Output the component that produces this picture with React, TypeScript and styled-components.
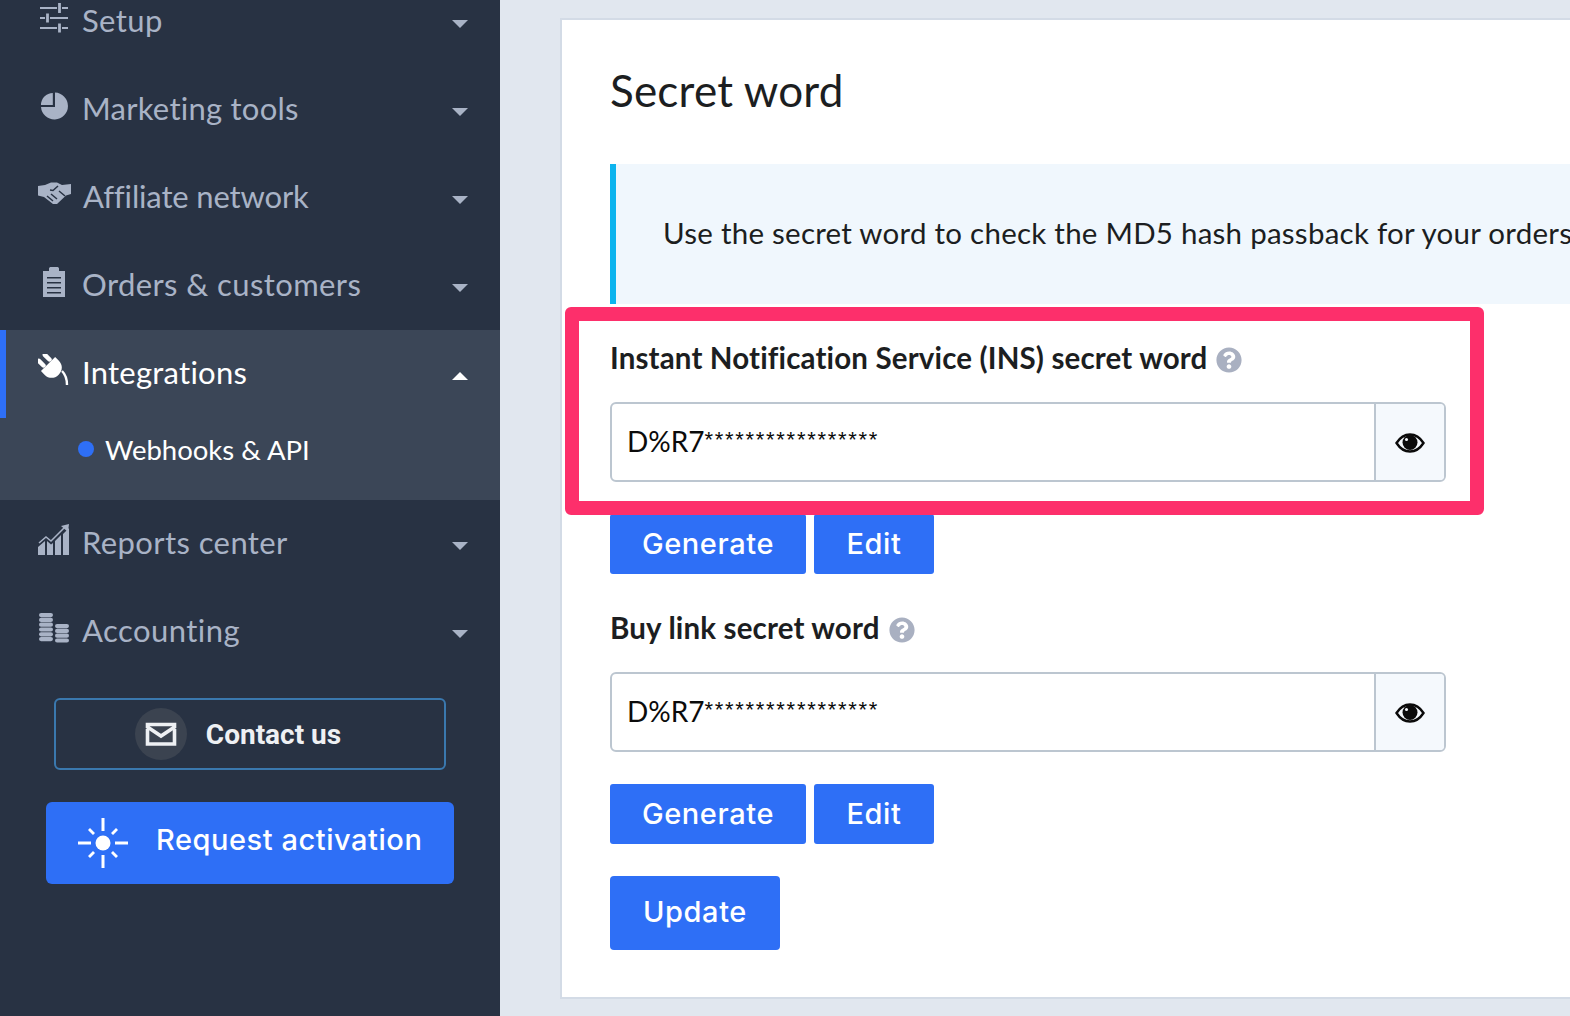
import React from "react";
import styled, { createGlobalStyle } from "styled-components";
import { FaQuestionCircle } from "react-icons/fa";

const Global = createGlobalStyle`
  html, body { margin: 0; padding: 0; background: #e1e7ef; }
  body {
    font-family: "Lato", "Liberation Sans", sans-serif;
    font-variant-ligatures: none;
    overflow: hidden;
  }
`;

const SetupIcon = () => (
  <svg width="30" height="30" viewBox="0 0 30 30" fill="none" stroke="currentColor" strokeWidth="2">
    <path d="M1 5h17M23 5h6M1 15h5M11 15h18M1 25h17M23 25h6" />
    <path d="M20.500 0v10M8.500 10.500v9M20.500 20.500v9" strokeWidth="2.800" />
  </svg>
);

const PieIcon = () => (
  <svg width="30" height="30" viewBox="0 0 30 30" fill="currentColor">
    <path d="M16 1.500A13.500 13.500 0 1 1 2 16h14z" />
    <path d="M13.800 2v12H2A12 12 0 0 1 13.800 2z" />
  </svg>
);

const HandshakeIcon = () => (
  <svg width="33" height="24" viewBox="0 0 33 24">
    <path fill="currentColor" d="M0 4l7-1 6-2.500h6l5 2.500 9-1v10l-5 1.500-9 8.500h-4l-9-7-6-1.500z" />
    <path fill="none" stroke="#283243" strokeWidth="1.500" d="M20 4l-5 4.500-3-.5M21 9l6 5M9 14l6 5M13 12l6 5" />
  </svg>
);

const OrdersIcon = () => (
  <svg width="30" height="32" viewBox="0 0 30 32">
    <path fill="currentColor" fillRule="evenodd" d="M4 5h6V2.500C10 1.500 11 1 12 1h6c1 0 2 .5 2 1.500V5h6v26H4zM8 11v1.500h14V11zM8 16v1.500h14V16zM8 21v1.500h14V21zM8 26v1.500h14V26z" />
  </svg>
);

const PlugIcon = () => (
  <svg width="32" height="32" viewBox="0 0 32 32" fill="currentColor">
    <g transform="rotate(-45 15 15)">
      <rect x="8.500" y="-3" width="4.500" height="11" rx="2.200" />
      <rect x="17" y="-3" width="4.500" height="11" rx="2.200" />
      <path d="M5 8h20v5c0 6-4 10-10 10S5 19 5 13z" />
    </g>
    <path fill="none" stroke="currentColor" strokeWidth="2.400" d="M24 17c3 3 5 7 5 14" />
  </svg>
);

const ReportsIcon = () => (
  <svg width="32" height="32" viewBox="0 0 32 32">
    <path fill="currentColor" d="M0 31v-8l7-6v14zM9 31V17l4 3.500 2-1.500V31zM17 31V17l6-6v20zM25 31V10l6-6v27z" />
    <path fill="none" stroke="currentColor" strokeWidth="1.500" d="M1 19l7-6 5 4L27 3" />
    <path fill="currentColor" d="M23 2l8-2-1 8z" />
  </svg>
);

const CoinStack = ({ x, width, top, count }: { x: number; width: number; top: number; count: number }) => (
  <g>
    {Array.from({ length: count }).map((_, i) => (
      <rect key={i} x={x} y={top + i * 4.800} width={width} height="4.200" rx="2.100" fill="currentColor" />
    ))}
  </g>
);

const CoinsIcon = () => (
  <svg width="32" height="30" viewBox="0 0 32 30">
    <CoinStack x={1} width={14} top={0} count={6} />
    <CoinStack x={17} width={14} top={11} count={4} />
  </svg>
);

const EyeIcon = () => (
  <svg width="30" height="20" viewBox="0 0 30 20">
    <path fill="none" stroke="#0b0b0b" strokeWidth="2.400" d="M1.500 10C5 4.500 9.500 1.500 15 1.500S25 4.500 28.500 10C25 15.500 20.500 18.500 15 18.500S5 15.500 1.500 10z" />
    <circle cx="15" cy="9.500" r="7.500" fill="#0b0b0b" />
    <circle cx="11.500" cy="6.500" r="1.500" fill="#f5f9fd" />
  </svg>
);

const MailIcon = () => (
  <svg width="32" height="24" viewBox="0 0 32 24" fill="none" stroke="#eef0f3" strokeWidth="3.600">
    <path d="M2.500 7v15h27V7" />
    <path d="M2.500 2.500h27v2.500L16 14 2.500 5z" />
  </svg>
);

const SunIcon = () => (
  <svg width="50" height="50" viewBox="0 0 50 50" fill="#fff">
    <circle cx="25" cy="25" r="7.500" />
    <rect x="23.500" y="0" width="3" height="13" />
    <rect x="23.500" y="37" width="3" height="13" />
    <rect x="0" y="23.500" width="13" height="3" />
    <rect x="37" y="23.500" width="13" height="3" />
    <path d="M12 10l5 5-2 2-5-5zM38 10l2 2-5 5-2-2zM15 33l2 2-5 5-2-2zM35 33l5 5-2 2-5-5z" />
  </svg>
);

const menuBefore = [
  { label: "Setup", icon: <SetupIcon />, tracking: 0.4 },
  { label: "Marketing tools", icon: <PieIcon />, tracking: 0.25 },
  { label: "Affiliate network", icon: <HandshakeIcon />, tracking: -0.15 },
  { label: "Orders & customers", icon: <OrdersIcon />, tracking: 0.4 },
];

const menuAfter = [
  { label: "Reports center", icon: <ReportsIcon />, tracking: 0.4 },
  { label: "Accounting", icon: <CoinsIcon />, tracking: 0.45 },
];

const secretFields = [
  { label: "Instant Notification Service (INS) secret word", highlighted: true },
  { label: "Buy link secret word", highlighted: false },
];

const MenuRow = ({ label, icon, tracking }: { label: string; icon: JSX.Element; tracking: number }) => (
  <Row>
    <IconSlot>{icon}</IconSlot>
    <RowLabel $tracking={tracking}>{label}</RowLabel>
    <Caret />
  </Row>
);

const SecretField = ({ label, highlighted }: { label: string; highlighted: boolean }) => (
  <FieldBlock>
    {highlighted && <Highlight />}
    <FieldLabel>
      {label}
      <HelpIcon><FaQuestionCircle size={26} /></HelpIcon>
    </FieldLabel>
    <InputGroup>
      <InputValue>D%R7<Stars>*****************</Stars></InputValue>
      <EyeAddon><EyeIcon /></EyeAddon>
    </InputGroup>
    <ButtonRow>
      <SmallButton $width={196}>Generate</SmallButton>
      <SmallButton $width={120}>Edit</SmallButton>
    </ButtonRow>
  </FieldBlock>
);

export default function App() {
  return (
    <Page>
      <Global />
      <Sidebar>
        <Menu>
          {menuBefore.map((item) => <MenuRow key={item.label} {...item} />)}
          <ActiveGroup>
            <ActiveRow>
              <IconSlot><PlugIcon /></IconSlot>
              <RowLabel $tracking={0.25}>Integrations</RowLabel>
              <Caret $up />
            </ActiveRow>
            <SubItem>
              <Dot />
              Webhooks &amp; API
            </SubItem>
          </ActiveGroup>
          {menuAfter.map((item) => <MenuRow key={item.label} {...item} />)}
        </Menu>
        <ContactButton>
          <MailCircle><MailIcon /></MailCircle>
          Contact us
        </ContactButton>
        <ActivateButton>
          <SunIcon />
          Request activation
        </ActivateButton>
      </Sidebar>
      <Main>
        <Card>
          <Title>Secret word</Title>
          <InfoBox>Use the secret word to check the MD5 hash passback for your orders</InfoBox>
          {secretFields.map((f) => <SecretField key={f.label} {...f} />)}
          <UpdateButton>Update</UpdateButton>
        </Card>
      </Main>
    </Page>
  );
}

const Page = styled.div`
  display: flex;
  width: 1570px;
  height: 1016px;
  overflow: hidden;
`;
const Sidebar = styled.aside`
  flex: 0 0 500px;
  background: #283243;
  display: flex;
  flex-direction: column;
  align-items: center;
`;
const Menu = styled.nav`
  align-self: stretch;
  margin-top: -22px;
`;
const Row = styled.div`
  display: flex;
  align-items: center;
  height: 88px;
  padding: 0 32px 0 38px;
  color: #a9b3c6;
`;
const IconSlot = styled.span`
  flex: 0 0 32px;
  height: 32px;
  margin-right: 12px;
  margin-top: -8px;
  display: flex;
  align-items: center;
  justify-content: center;
`;
const RowLabel = styled.span<{ $tracking: number }>`
  flex: 1;
  margin-bottom: 4px;
  font-size: 31px;
  line-height: 40px;
  letter-spacing: ${(p) => p.$tracking}px;
`;
const Caret = styled.span<{ $up?: boolean }>`
  width: 0;
  height: 0;
  border-left: 8px solid transparent;
  border-right: 8px solid transparent;
  ${(p) => (p.$up ? "border-bottom: 8px solid #fff;" : "border-top: 8px solid #a9b3c6;")}
  margin-top: 4px;
`;
const ActiveGroup = styled.div`
  background: #3b4657;
  height: 170px;
`;
const ActiveRow = styled(Row)`
  color: #fff;
  box-shadow: inset 6px 0 0 #2e6ff6;
`;
const SubItem = styled.div`
  display: flex;
  align-items: center;
  height: 64px;
  padding: 0 0 2px 78px;
  box-sizing: border-box;
  color: #fff;
  font-size: 27.500px;
`;
const Dot = styled.span`
  width: 16px;
  height: 16px;
  border-radius: 50%;
  background: #2e6ff6;
  margin-right: 11px;
`;
const ContactButton = styled.button`
  width: 392px;
  height: 72px;
  margin-top: 22px;
  padding: 0 24px 0 0;
  border: 2px solid #3a78ae;
  border-radius: 6px;
  background: transparent;
  color: #eef0f3;
  font: 700 28px "Roboto", sans-serif;
  display: flex;
  align-items: center;
  justify-content: center;
  gap: 19px;
`;
const MailCircle = styled.span`
  width: 52px;
  height: 52px;
  border-radius: 50%;
  background: #3b4350;
  display: flex;
  align-items: center;
  justify-content: center;
`;
const ActivateButton = styled.button`
  width: 408px;
  height: 82px;
  margin-top: 32px;
  border: 0;
  border-radius: 6px;
  background: #2e6ff6;
  color: #fff;
  font: 500 29px "Inter", sans-serif;
  letter-spacing: 0.55px;
  display: flex;
  align-items: center;
  padding: 0 0 8px 32px;
  gap: 28px;
  svg { margin-top: 8px; }
`;
const Main = styled.main`
  flex: 1;
  min-width: 0;
  padding: 18px 0 0 60px;
`;
const Card = styled.section`
  box-sizing: border-box;
  width: 1100px;
  height: 981px;
  background: #fff;
  border: 2px solid #d3dbe6;
  padding: 0 0 0 48px;
`;
const Title = styled.h1`
  margin: 45px 0 0;
  font-size: 44px;
  line-height: 50px;
  font-weight: 400;
  letter-spacing: 0.2px;
  color: #1c1e21;
`;
const InfoBox = styled.div`
  margin-top: 49px;
  height: 140px;
  box-sizing: border-box;
  display: flex;
  align-items: center;
  padding: 0 0 4px 47px;
  border-left: 6px solid #0db4ee;
  background: #f0f7fd;
  color: #1c1e21;
  font-size: 29.500px;
  letter-spacing: 0.25px;
  white-space: nowrap;
`;
const FieldBlock = styled.div`
  position: relative;
  height: 270px;
`;
const Highlight = styled.div`
  position: absolute;
  left: -45px;
  top: 3px;
  width: 919px;
  height: 208px;
  box-sizing: border-box;
  border: 14px solid #fd2f6b;
  border-radius: 6px;
`;
const FieldLabel = styled.div`
  display: flex;
  align-items: center;
  padding-top: 33px;
  height: 40px;
  font-size: 29.500px;
  font-weight: 700;
  letter-spacing: 0.15px;
  color: #1c1e21;
`;
const HelpIcon = styled.span`
  display: flex;
  margin-left: 9px;
  margin-top: 5px;
  color: #a9b0c1;
`;
const InputGroup = styled.div`
  display: flex;
  box-sizing: border-box;
  width: 836px;
  height: 80px;
  margin-top: 25px;
  border: 2px solid #bcc6d0;
  border-radius: 6px;
  overflow: hidden;
`;
const InputValue = styled.div`
  flex: 1;
  padding: 0 0 2px 15px;
  display: flex;
  align-items: center;
  font-size: 28px;
  color: #0b0b0b;
`;
const Stars = styled.span`
  margin: 0 0 2px 0;
  font: 400 22px "Liberation Sans", sans-serif;
  letter-spacing: 1.700px;
`;
const EyeAddon = styled.div`
  flex: 0 0 68px;
  border-left: 2px solid #bcc6d0;
  background: #f5f9fd;
  display: flex;
  align-items: center;
  justify-content: center;
  svg { margin-top: 2px; }
`;
const ButtonRow = styled.div`
  display: flex;
  gap: 8px;
  margin-top: 32px;
`;
const SmallButton = styled.button<{ $width: number }>`
  width: ${(p) => p.$width}px;
  height: 60px;
  padding: 0 0 2px;
  border: 0;
  border-radius: 3px;
  background: #2e6ff6;
  color: #fff;
  font: 500 29px "Inter", sans-serif;
  letter-spacing: 0.6px;
`;
const UpdateButton = styled.button`
  display: block;
  width: 170px;
  height: 74px;
  margin-top: 32px;
  padding: 0 0 4px;
  border: 0;
  border-radius: 4px;
  background: #2e6ff6;
  color: #fff;
  font: 500 29px "Inter", sans-serif;
  letter-spacing: 0.6px;
`;
